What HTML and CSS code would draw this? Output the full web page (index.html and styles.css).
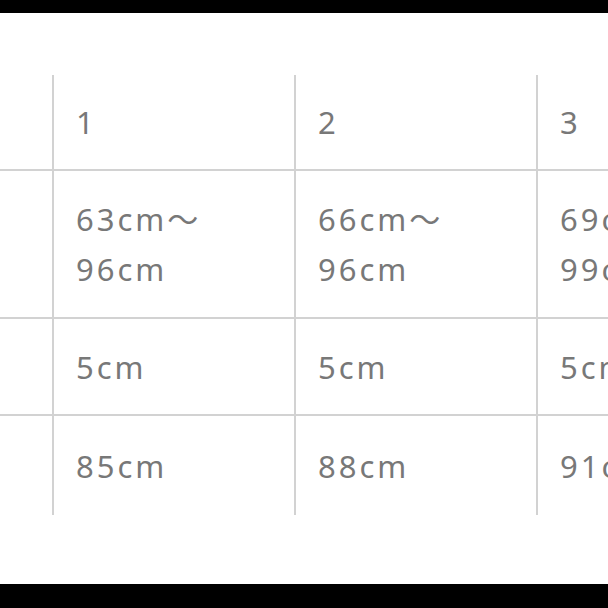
FILE: index.html
```html
<!DOCTYPE html>
<html lang="ja">
<head>
<meta charset="utf-8">
<title>サイズ表</title>
<link rel="stylesheet" href="styles.css">
</head>
<body>
<div class="page">
  <div class="bar bar-top"></div>
  <div class="sheet">
    <div class="table">
      <div class="row row-head">
        <div class="cell cell-label"></div>
        <div class="cell">1</div>
        <div class="cell">2</div>
        <div class="cell">3</div>
      </div>
      <div class="row row-tall">
        <div class="cell cell-label"></div>
        <div class="cell"><span>63cm～</span><span>96cm</span></div>
        <div class="cell"><span>66cm～</span><span>96cm</span></div>
        <div class="cell"><span>69cm～</span><span>99cm</span></div>
      </div>
      <div class="row row-mid">
        <div class="cell cell-label"></div>
        <div class="cell">5cm</div>
        <div class="cell">5cm</div>
        <div class="cell">5cm</div>
      </div>
      <div class="row row-last">
        <div class="cell cell-label"></div>
        <div class="cell">85cm</div>
        <div class="cell">88cm</div>
        <div class="cell">91cm</div>
      </div>
    </div>
  </div>
  <div class="bar bar-bottom"></div>
</div>
</body>
</html>
```
FILE: styles.css
```css
* { box-sizing: border-box; }
html, body {
  margin: 0;
  padding: 0;
  background: #000;
}
.page {
  width: 608px;
  height: 608px;
  display: flex;
  flex-direction: column;
  overflow: hidden;
}
.bar-top { height: 13px; background: #000; flex: none; }
.bar-bottom { height: 24px; background: #000; flex: none; }
.sheet {
  flex: 1;
  background: #fff;
  overflow: hidden;
  padding-top: 62px;
}
.table {
  width: 800px;
  display: flex;
  flex-direction: column;
  font-family: "Noto Sans", "Noto Sans CJK JP", sans-serif;
  font-size: 31px;
  letter-spacing: 3px;
  color: #787878;
}
.row {
  display: flex;
  border-bottom: 2px solid #d2d2d2;
}
.row-head { height: 96px; }
.row-tall { height: 148px; }
.row-mid { height: 97px; }
.row-last { height: 99px; border-bottom: none; }
.cell {
  width: 242px;
  flex: none;
  border-left: 2px solid #d2d2d2;
  padding-left: 22px;
  display: flex;
  flex-direction: column;
  justify-content: center;
  line-height: 50px;
}
.cell-label {
  width: 52px;
  border-left: none;
  padding-left: 0;
}
```
